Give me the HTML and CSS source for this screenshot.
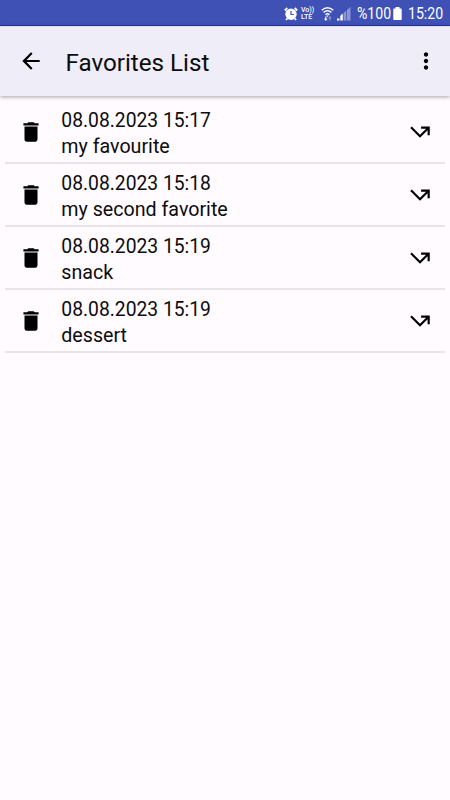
FILE: index.html
```html
<!DOCTYPE html>
<html lang="en">
<head>
<meta charset="utf-8">
<title>Favorites List</title>
<link rel="stylesheet" href="styles.css">
</head>
<body>
<svg width="0" height="0" class="defs">
  <symbol id="trash" viewBox="0 0 24 24"><path d="M6 19c0 1.100.9 2 2 2h8c1.100 0 2-.9 2-2V7H6v12zM19 4h-3.500l-1-1h-5l-1 1H5v2h14V4z"/></symbol>
  <symbol id="go" viewBox="0 0 24 24"><path d="M3 8.410l9 9 7-7V15h2V7h-8v2h4.590L12 14.590 4.410 7 3 8.410z"/></symbol>
</svg>
<div class="status">
  <svg class="alarm" width="14" height="14" viewBox="0 0 14 14"><circle cx="7" cy="7.200" r="5.700" fill="#fff"/><path d="M.8 3.500L3.300 1M10.700 1l2.500 2.500M3.200 11.500L2 13M10.800 11.500L12 13" stroke="#fff" stroke-width="1.800"/><path d="M7 4v3.500h2.800" fill="none" stroke="#3f51b5" stroke-width="1.200"/></svg>
  <div class="volte">Vo))<br>LTE</div>
  <svg class="wifi" width="13" height="16" viewBox="0 0 13 16"><g fill="none" stroke="#fff" stroke-width="1.400"><path d="M.7 4.200q5.800-5 11.600 0M2.600 6.400q3.900-3.300 7.800 0M4.500 8.500q2-1.600 4 0"/></g><path d="M6.500 11.100L5.200 9.500h2.600z" fill="#fff"/><path d="M4.200 10.500h1.200v2.300h1.200L4.800 15 3 12.800h1.200z" fill="#fff"/><path d="M8.300 14.500v-2.300H7.100L8.900 10l1.800 2.200H9.500v2.300z" fill="#8b96d3"/></svg>
  <svg class="signal" width="14" height="14" viewBox="0 0 14 14"><path d="M0 13.500v-2h2.500v2zM3.300 13.500V8.800l2.500-2.300v7z" fill="#fff"/><path d="M6.600 13.500V6l2.500-2.300v9.800zM9.800 13.500V3L13.500 0v13.500z" fill="#8b96d3"/></svg>
  <span class="percent">%100</span>
  <svg class="battery" width="9" height="13" viewBox="0 0 9 13"><path d="M2.500 0h4v1.500H8q.7 0 .7.700v10q0 .8-.7.800H1q-.7 0-.7-.8v-10q0-.7.7-.7h1.500z" fill="#fff"/></svg>
  <span class="clock">15:20</span>
</div>
<header class="bar">
  <svg class="back" width="26" height="26" viewBox="0 0 24 24"><path d="M20 11H7.830l5.590-5.590L12 4l-8 8 8 8 1.410-1.410L7.830 13H20v-2z"/></svg>
  <h1>Favorites List</h1>
  <svg class="more" width="26" height="26" viewBox="0 0 24 24"><path d="M12 8c1.100 0 2-.9 2-2s-.9-2-2-2-2 .9-2 2 .9 2 2 2zm0 2c-1.100 0-2 .9-2 2s.9 2 2 2 2-.9 2-2-.9-2-2-2zm0 6c-1.100 0-2 .9-2 2s.9 2 2 2 2-.9 2-2-.9-2-2-2z"/></svg>
</header>
<main class="list">
  <div class="row"><svg class="icon"><use href="#trash"/></svg><div class="text"><div class="date">08.08.2023 15:17</div><div class="name">my favourite</div></div><svg class="icon"><use href="#go"/></svg></div>
  <div class="row"><svg class="icon"><use href="#trash"/></svg><div class="text"><div class="date">08.08.2023 15:18</div><div class="name">my second favorite</div></div><svg class="icon"><use href="#go"/></svg></div>
  <div class="row"><svg class="icon"><use href="#trash"/></svg><div class="text"><div class="date">08.08.2023 15:19</div><div class="name">snack</div></div><svg class="icon"><use href="#go"/></svg></div>
  <div class="row"><svg class="icon"><use href="#trash"/></svg><div class="text"><div class="date">08.08.2023 15:19</div><div class="name">dessert</div></div><svg class="icon"><use href="#go"/></svg></div>
</main>
</body>
</html>
```
FILE: styles.css
```css
* { box-sizing: border-box; }
body {
  margin: 0;
  height: 800px;
  overflow: hidden;
  background: #fffbff;
  color: #0c0c0e;
  font-family: Roboto, "Liberation Sans", sans-serif;
}
.defs { position: absolute; }
svg { display: block; flex: none; }
.status {
  display: flex;
  align-items: center;
  height: 26px;
  padding: 2px 0 0 284px;
  background: #3f51b5;
  border-bottom: 1px solid #2438a8;
  color: #fff;
  font-size: 16px;
  white-space: nowrap;
}
.volte {
  width: 14px;
  margin-left: 3px;
  font-size: 7px;
  line-height: 7px;
  font-weight: 500;
}
.wifi { margin-left: 6px; }
.signal { margin-left: 3px; }
.percent, .clock { transform: scaleX(.88); transform-origin: 0 50%; }
.percent { margin-left: 6px; width: 36px; }
.clock { margin-left: 6px; }
.bar {
  display: flex;
  align-items: center;
  height: 70px;
  padding: 0 11px 0 17.500px;
  background: #efedf8;
  border-top: 1px solid #dcdaef;
  box-shadow: 0 1px 4px rgba(0, 0, 0, .36);
}
.back, .more { margin-top: -1px; }
h1 {
  flex: 1;
  margin: 2px 0 0 22px;
  font-size: 24.200px;
  line-height: 30px;
  font-weight: 400;
}
.list { padding: 4px 5px 0; }
.row {
  display: flex;
  align-items: center;
  height: 63px;
  padding: 0 12.500px;
  border-bottom: 2px solid #e7e5e9;
}
.row:first-child { height: 64px; padding-top: 1px; }
.icon { width: 26px; height: 26px; fill: #000; }
.text {
  flex: 1;
  margin-left: 17.800px;
  padding-top: 4px;
}
.date { font-size: 19.300px; line-height: 26px; }
.name { font-size: 19.650px; line-height: 26px; }
```
